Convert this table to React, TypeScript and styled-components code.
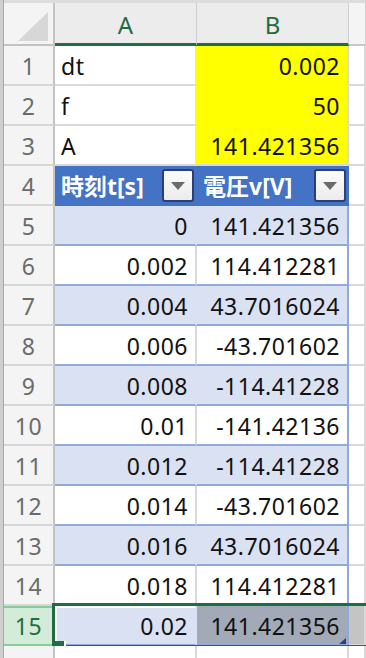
import React from "react";
import styled, { createGlobalStyle } from "styled-components";

const GRID = "#d9d9d9";
const BLUE = "#4472c4";
const BAND = "#d9e1f2";
const BAND_LINE = "#8eaadb";
const GREEN = "#1f6d40";

const GlobalStyle = createGlobalStyle`
  *, *::before, *::after { box-sizing: border-box; }
  html, body { margin: 0; padding: 0; background: #fff; overflow: hidden; }
  body { font-family: "Noto Sans", "Noto Sans CJK JP", sans-serif; color: #111; }
`;

const Sheet = styled.div`
  display: flex;
  width: 366px;
  height: 658px;
  overflow: hidden;
`;

const Edge = styled.div`
  flex: none;
  width: 4px;
  background: #cfcfcf;
  border-right: 1px solid #a8a8a8;
`;

const Grid = styled.div`
  flex: 1;
  min-width: 0;
  display: flex;
  flex-direction: column;
`;

const HeaderRow = styled.div`
  flex: none;
  display: flex;
  height: 46px;
  border-top: 3px solid #dcdcdc;
`;

const Corner = styled.div`
  flex: none;
  width: 51px;
  display: flex;
  justify-content: flex-end;
  align-items: flex-end;
  padding: 0 5px 3px 0;
  background: #f4f4f4;
  border-right: 2px solid #c3c3c3;
  border-bottom: 2px solid #c3c3c3;
`;

const CornerTriangle = styled.div`
  width: 30px;
  height: 29px;
  background: #d7d7d7;
  clip-path: polygon(100% 0, 100% 100%, 0 100%);
`;

const ColHeader = styled.div<{ $w?: number; $selected?: boolean }>`
  flex: ${(p) => (p.$w ? "none" : "1")};
  width: ${(p) => (p.$w ? `${p.$w}px` : "auto")};
  display: flex;
  align-items: center;
  justify-content: center;
  padding-top: 2px;
  font-size: 24px;
  color: ${GREEN};
  background: ${(p) => (p.$selected ? "#ececec" : "#f4f4f4")};
  border-right: 1px solid #cfcfcf;
  border-bottom: ${(p) => (p.$selected ? `3px solid ${GREEN}` : "2px solid #c8c8c8")};
`;

const Row = styled.div`
  flex: none;
  display: flex;
  height: 40px;
  position: relative;
`;

const RowNum = styled.div<{ $active?: boolean }>`
  flex: none;
  width: 51px;
  display: flex;
  align-items: center;
  justify-content: center;
  padding-top: 2px;
  font-size: 23px;
  letter-spacing: 0.5px;
  color: ${(p) => (p.$active ? GREEN : "#6b6b6b")};
  background: ${(p) => (p.$active ? "#d2ecd9" : "#f4f4f4")};
  border-right: 2px solid #c3c3c3;
  border-bottom: 2px solid ${(p) => (p.$active ? "#86cd9b" : "#d6d6d6")};
  box-shadow: ${(p) => (p.$active ? "inset 0 2px 0 #86cd9b" : "none")};
`;

const Cell = styled.div<{
  $w?: number;
  $bg?: string;
  $right?: string;
  $bottom?: string;
  $align?: "left" | "right";
}>`
  flex: ${(p) => (p.$w ? "none" : "1")};
  width: ${(p) => (p.$w ? `${p.$w}px` : "auto")};
  position: relative;
  display: flex;
  align-items: center;
  justify-content: ${(p) => (p.$align === "right" ? "flex-end" : "flex-start")};
  padding: 2px 7px 0 6px;
  font-size: 23px;
  letter-spacing: 0.5px;
  white-space: nowrap;
  background: ${(p) => p.$bg || "#fff"};
  border-right: 2px solid ${(p) => p.$right || GRID};
  border-bottom: 2px solid ${(p) => p.$bottom || GRID};
`;

const HeadCell = styled.div<{ $w: number }>`
  flex: none;
  width: ${(p) => p.$w}px;
  display: flex;
  align-items: center;
  justify-content: space-between;
  padding: 0 1px 0 6px;
  font-family: "Noto Sans", "Noto Sans CJK JP", sans-serif;
  font-size: 23px;
  font-weight: 700;
  color: #fff;
  background: ${BLUE};
  border-right: 2px solid ${BLUE};
  border-bottom: 2px solid ${BLUE};
`;

const FilterButton = styled.div`
  width: 32px;
  height: 33px;
  display: flex;
  align-items: center;
  justify-content: center;
  border: 2px solid #2a3f76;
  border-radius: 3px;
  background: linear-gradient(#fbfbfb, #ececec);

  &::after {
    content: "";
    border-left: 7px solid transparent;
    border-right: 7px solid transparent;
    border-top: 8px solid #6a6a6a;
    margin-top: 2px;
  }
`;

const Selection = styled.div`
  position: absolute;
  left: 48px;
  top: -3px;
  right: -20px;
  height: 45px;
  border: 3px solid ${GREEN};
  pointer-events: none;
`;

const FillHandle = styled.div`
  position: absolute;
  left: -2px;
  bottom: -6px;
  width: 13px;
  height: 10px;
  background: ${GREEN};
  border-right: 2px solid #fff;
`;

const ResizeHandle = styled.div`
  position: absolute;
  right: 1px;
  bottom: 0;
  width: 7px;
  height: 6px;
  background: #2c3e8c;
  clip-path: polygon(100% 0, 100% 100%, 0 100%);
`;

const W_A = 142;
const W_B = 152;

const params = [
  { n: 1, a: "dt", b: "0.002" },
  { n: 2, a: "f", b: "50" },
  { n: 3, a: "A", b: "141.421356" },
];

const data = [
  ["0", "141.421356"],
  ["0.002", "114.412281"],
  ["0.004", "43.7016024"],
  ["0.006", "-43.701602"],
  ["0.008", "-114.41228"],
  ["0.01", "-141.42136"],
  ["0.012", "-114.41228"],
  ["0.014", "-43.701602"],
  ["0.016", "43.7016024"],
  ["0.018", "114.412281"],
  ["0.02", "141.421356"],
];

export default function App() {
  return (
    <>
      <GlobalStyle />
      <Sheet>
        <Edge />
        <Grid>
          <HeaderRow>
            <Corner>
              <CornerTriangle />
            </Corner>
            <ColHeader $w={W_A} $selected>
              A
            </ColHeader>
            <ColHeader $w={W_B} $selected>
              B
            </ColHeader>
            <ColHeader />
          </HeaderRow>

          {params.map((r) => (
            <Row key={r.n}>
              <RowNum>{r.n}</RowNum>
              <Cell $w={W_A} $right="#ffff00">
                {r.a}
              </Cell>
              <Cell
                $w={W_B}
                $bg="#ffff00"
                $align="right"
                $bottom={r.n === 3 ? GRID : "#ffff00"}
              >
                {r.b}
              </Cell>
              <Cell />
            </Row>
          ))}

          <Row>
            <RowNum>4</RowNum>
            <HeadCell $w={W_A}>
              時刻t[s]
              <FilterButton />
            </HeadCell>
            <HeadCell $w={W_B}>
              電圧v[V]
              <FilterButton />
            </HeadCell>
            <Cell />
          </Row>

          {data.map(([t, v], i) => {
            const n = i + 5;
            const banded = n % 2 === 1;
            const last = n === 15;
            return (
              <Row key={n}>
                <RowNum $active={last}>{n}</RowNum>
                <Cell
                  $w={W_A}
                  $align="right"
                  $bg={banded ? BAND : "#fff"}
                  $right={banded ? BAND : GRID}
                  $bottom={BAND_LINE}
                  style={last ? { boxShadow: "inset 2px 2px 0 #fff" } : undefined}
                >
                  {t}
                </Cell>
                <Cell
                  $w={W_B}
                  $align="right"
                  $bg={last ? "#a3aab7" : banded ? BAND : "#fff"}
                  $right={BAND_LINE}
                  $bottom={BAND_LINE}
                >
                  {v}
                  {last && <ResizeHandle />}
                </Cell>
                <Cell $bg={last ? "#c4c4c4" : "#fff"} />
                {last && (
                  <Selection>
                    <FillHandle />
                  </Selection>
                )}
              </Row>
            );
          })}

          <Row>
            <RowNum>16</RowNum>
            <Cell $w={W_A} />
            <Cell $w={W_B} />
            <Cell />
          </Row>
        </Grid>
      </Sheet>
    </>
  );
}
